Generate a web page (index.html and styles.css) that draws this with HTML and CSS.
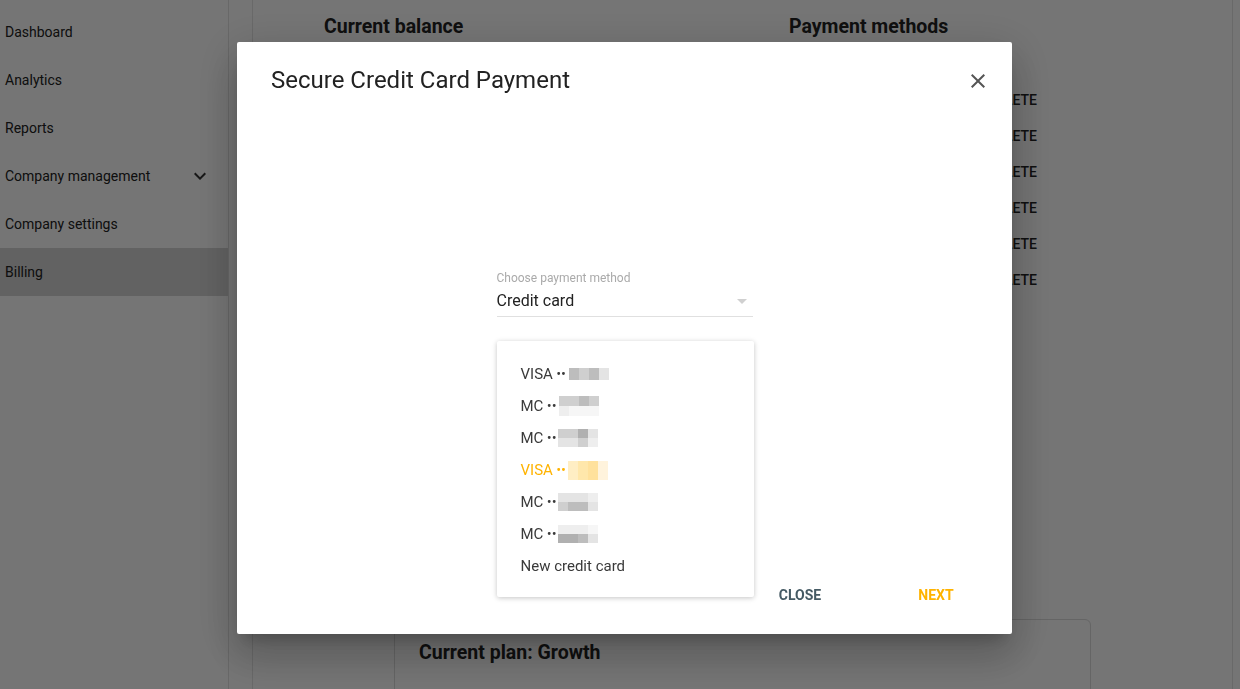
FILE: index.html
```html
<!DOCTYPE html>
<html lang="en">
<head>
<meta charset="utf-8">
<title>Billing</title>
<link rel="stylesheet" href="styles.css">
</head>
<body>
<div class="app">
  <nav class="sidebar">
    <div class="nav-item">Dashboard</div>
    <div class="nav-item">Analytics</div>
    <div class="nav-item">Reports</div>
    <div class="nav-item">Company management
      <svg class="chev" viewBox="0 0 24 24" width="24" height="24"><path d="M16.59 8.59L12 13.17 7.41 8.59 6 10l6 6 6-6z"/></svg>
    </div>
    <div class="nav-item">Company settings</div>
    <div class="nav-item active">Billing</div>
  </nav>
  <main class="main">
    <section class="card">
      <div class="cols">
        <div class="col-balance">
          <h2 class="heading">Current balance</h2>
        </div>
        <div class="col-methods">
          <h2 class="heading">Payment methods</h2>
          <ul class="method-list">
            <li class="method-row"><span class="del">DELETE</span></li>
            <li class="method-row"><span class="del">DELETE</span></li>
            <li class="method-row"><span class="del">DELETE</span></li>
            <li class="method-row"><span class="del">DELETE</span></li>
            <li class="method-row"><span class="del">DELETE</span></li>
            <li class="method-row"><span class="del">DELETE</span></li>
          </ul>
        </div>
      </div>
      <div class="plan">
        <h2 class="heading">Current plan: Growth</h2>
      </div>
    </section>
  </main>
</div>

<div class="overlay">
  <div class="dialog">
    <header class="dialog-head">
      <h1 class="dialog-title">Secure Credit Card Payment</h1>
      <svg class="close-x" viewBox="0 0 24 24" width="24" height="24"><path d="M19 6.41L17.59 5 12 10.59 6.41 5 5 6.41 10.59 12 5 17.59 6.41 19 12 13.41 17.59 19 19 17.59 13.41 12z"/></svg>
    </header>
    <div class="dialog-body">
      <div class="field">
        <div class="field-label">Choose payment method</div>
        <div class="field-value">Credit card
          <svg class="arrow" viewBox="0 0 24 24" width="24" height="24"><path d="M7 10l5 5 5-5z"/></svg>
        </div>
        <ul class="menu">
          <li class="menu-item">VISA <span class="dots">••</span> <span class="px px-a"><i class="g3"></i><i class="g2"></i><i class="g3"></i><i class="g1"></i></span></li>
          <li class="menu-item">MC <span class="dots">••</span><span class="px px-b"><i class="g2"></i><i class="g2"></i><i class="g3"></i><i class="g2"></i><i class="g0"></i><i class="gw"></i><i class="gw"></i><i class="gw"></i></span></li>
          <li class="menu-item">MC <span class="dots">••</span> <span class="px px-c"><i class="g2"></i><i class="g2"></i><i class="g4"></i><i class="g1"></i><i class="g1"></i><i class="g1"></i><i class="g2"></i><i class="g0"></i></span></li>
          <li class="menu-item sel">VISA <span class="dots">••</span> <span class="px px-a px-tall"><i class="y1"></i><i class="y2"></i><i class="y3"></i><i class="y0"></i></span></li>
          <li class="menu-item">MC <span class="dots">••</span> <span class="px px-c"><i class="g1"></i><i class="g1"></i><i class="g1"></i><i class="g0"></i><i class="g2"></i><i class="g3"></i><i class="g3"></i><i class="g1"></i></span></li>
          <li class="menu-item">MC <span class="dots">••</span> <span class="px px-c"><i class="g0"></i><i class="g0"></i><i class="g0"></i><i class="gw"></i><i class="g4"></i><i class="g4"></i><i class="g3"></i><i class="g1"></i></span></li>
          <li class="menu-item">New credit card</li>
        </ul>
      </div>
    </div>
    <footer class="dialog-foot">
      <button class="btn btn-close">Close</button>
      <button class="btn btn-next">Next</button>
    </footer>
  </div>
</div>
</body>
</html>
```

FILE: styles.css
```css
* { box-sizing: border-box; }
html, body {
  margin: 0;
  height: 100%;
  overflow: hidden;
}
body {
  font-family: Roboto, "Liberation Sans", Arial, sans-serif;
  color: #212121;
  background: #fff;
}
ul { list-style: none; margin: 0; padding: 0; }
h1, h2 { margin: 0; }

.app {
  display: flex;
  height: 689px;
  overflow: hidden;
}
.sidebar {
  width: 229px;
  flex: none;
  border-right: 1px solid #e2e2e2;
  padding-top: 8px;
}
.nav-item {
  height: 48px;
  display: flex;
  align-items: center;
  justify-content: space-between;
  padding: 0 16px 0 5px;
  font-size: 14px;
  color: #222;
}
.nav-item.active { background: #d5d5d5; }
.chev { fill: #333; }

.main {
  flex: 1;
  padding: 0 7px 0 23px;
}
.card {
  margin-top: -4px;
  height: 693px;
  overflow: hidden;
  border: 1px solid #e4e4e4;
  border-bottom: 0;
  padding: 18px 0 0 71px;
}
.cols { display: flex; }
.col-balance { width: 465px; }
.col-methods { width: 248px; }
.heading {
  font-size: 19.5px;
  font-weight: 700;
  line-height: 24px;
  color: #222;
}
.method-list { margin-top: 43px; }
.method-row {
  height: 36px;
  display: flex;
  align-items: center;
  justify-content: flex-end;
}
.del {
  font-size: 14px;
  font-weight: 500;
  color: #222;
}
.plan {
  margin: 321px 0 0 70px;
  width: 697px;
  height: 100px;
  border: 1px solid #dcdcdc;
  border-radius: 6px;
  padding: 21px 24px;
}

/* overlay + dialog */
.overlay {
  position: fixed;
  inset: 0;
  background: rgba(0, 0, 0, 0.54);
  display: flex;
  align-items: flex-start;
  padding: 42px 0 0 237px;
}
.dialog {
  width: 775px;
  height: 592px;
  background: #fff;
  border-radius: 2px;
  display: flex;
  flex-direction: column;
  box-shadow: 0 11px 15px -7px rgba(0,0,0,.2), 0 24px 38px 3px rgba(0,0,0,.14), 0 9px 46px 8px rgba(0,0,0,.12);
}
.dialog-head {
  display: flex;
  align-items: center;
  justify-content: space-between;
  padding: 22px 22px 0 34px;
  height: 54px;
}
.dialog-title {
  font-size: 24px;
  font-weight: 400;
  line-height: 32px;
  color: #222;
}
.close-x { fill: #555; margin-top: 1px; }

.dialog-body {
  flex: 1;
  display: flex;
  justify-content: center;
  padding-top: 175px;
}
.field {
  position: relative;
  width: 256px;
  height: 46px;
  border-bottom: 1px solid #e0e0e0;
}
.field-label {
  font-size: 12px;
  line-height: 14px;
  color: #aaa;
}
.field-value {
  margin-top: 4px;
  font-size: 16px;
  line-height: 20px;
  color: #222;
  display: flex;
  justify-content: space-between;
  align-items: center;
}
.arrow { fill: #d0d0d0; margin-right: -1px; }

.menu {
  position: absolute;
  left: 0;
  top: calc(100% + 25px);
  width: 257px;
  background: #fff;
  border-radius: 2px;
  padding: 17px 0 15px;
  box-shadow: 0 1px 6px rgba(0,0,0,.12), 0 1px 4px rgba(0,0,0,.12);
  z-index: 2;
}
.menu-item {
  height: 32px;
  display: flex;
  align-items: center;
  padding-left: 24px;
  font-size: 15px;
  color: #3a3a3a;
  white-space: pre;
}
.menu-item.sel { color: #ffb300; }
.dots { font-size: 12px; font-weight: 700; letter-spacing: 0.5px; }
.px {
  display: inline-grid;
  grid-template-columns: repeat(4, 10px);
  grid-auto-rows: 8px;
}
.px-a { grid-auto-rows: 12px; margin-left: 3px; }
.px-tall { grid-auto-rows: 19px; margin-left: 2px; }
.px-b { margin-left: 2px; grid-auto-rows: 10px; }
.px-c { margin-left: 1px; grid-auto-rows: 9px; }
.px i { display: block; }
.g0 { background: #eeeeee; }
.gw { background: #f6f6f6; }
.g1 { background: #e4e4e4; }
.g2 { background: #cfcfcf; }
.g3 { background: #bdbdbd; }
.g4 { background: #b0b0b0; }
.y0 { background: #fff3dc; }
.y1 { background: #ffeec4; }
.y2 { background: #ffe7ab; }
.y3 { background: #ffe19c; }

.dialog-foot {
  display: flex;
  justify-content: flex-end;
  gap: 48px;
  padding: 0 32px 21px 0;
}
.btn {
  min-width: 88px;
  height: 36px;
  padding: 0 16px;
  border: 0;
  background: transparent;
  font-family: inherit;
  font-size: 14px;
  font-weight: 700;
  text-transform: uppercase;
}
.btn-close { color: #455a64; }
.btn-next { color: #ffb300; }
```
